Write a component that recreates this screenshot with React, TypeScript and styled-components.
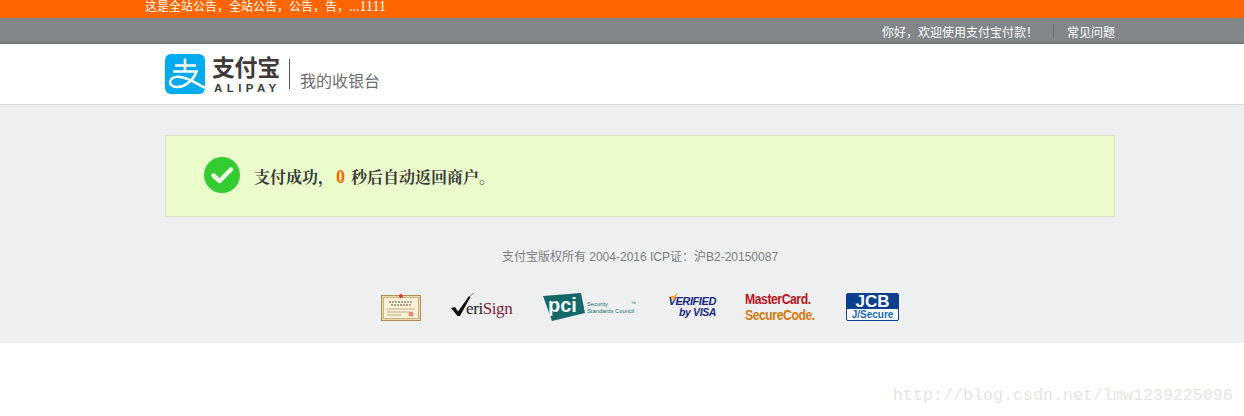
import React from "react";
import styled, { createGlobalStyle } from "styled-components";

const GlobalStyle = createGlobalStyle`
  html, body {
    margin: 0;
    padding: 0;
    background: #fff;
  }
  body {
    font-family: "Liberation Sans", "Noto Sans CJK SC", sans-serif;
  }
`;

const Page = styled.div`
  position: relative;
  width: 1244px;
  height: 416px;
  overflow: hidden;
`;

const Notice = styled.div`
  height: 18px;
  line-height: 14px;
  padding-left: 145px;
  background: #ff6600;
  color: #fff;
  font-size: 12px;
`;

const NoticeTail = styled.span`
  font-family: "Liberation Serif", serif;
  font-size: 14px;
`;

const TopBar = styled.div`
  height: 26px;
  display: flex;
  align-items: center;
  justify-content: flex-end;
  padding-right: 129px;
  background: linear-gradient(#7f8589 0, #82878b 88%, #6f7477 100%);
  color: #fff;
  font-size: 12px;
`;

const TopDivider = styled.span`
  width: 1px;
  height: 14px;
  margin: 0 13px 0 15px;
  background: #6c7276;
`;

const Header = styled.header`
  height: 60px;
  display: flex;
  padding-left: 165px;
  background: #fff;
  border-bottom: 1px solid #d9d9d9;
`;

const LogoMark = styled.svg`
  width: 40px;
  height: 40px;
  margin-top: 10px;
  flex: none;
`;

const Wordmark = styled.div`
  width: 68px;
  margin: 10px 0 0 7px;
  color: #3f3a39;
`;

const WordCn = styled.div`
  font-size: 23px;
  line-height: 28px;
  font-weight: 700;
  letter-spacing: -0.4px;
  white-space: nowrap;
`;

const WordEn = styled.div`
  font-size: 11.5px;
  line-height: 13px;
  font-weight: 700;
  letter-spacing: 4.4px;
  margin-left: 2px;
  white-space: nowrap;
`;

const HeaderDivider = styled.span`
  width: 1px;
  height: 30px;
  margin: 15px 10px 0 9px;
  background: #55585a;
`;

const Cashier = styled.div`
  margin-top: 27px;
  font-size: 16px;
  line-height: 22px;
  color: #6c6c6c;
`;

const Main = styled.main`
  height: 238px;
  padding-top: 30px;
  box-sizing: border-box;
  background: #eeeff1;
`;

const SuccessCard = styled.section`
  width: 950px;
  height: 82px;
  margin-left: 165px;
  padding-left: 38px;
  box-sizing: border-box;
  display: flex;
  align-items: center;
  gap: 14px;
  background: #ebfdcb;
  border: 1px solid #dfe4c4;
`;

const CheckIcon = styled.svg`
  width: 36px;
  height: 36px;
  flex: none;
  margin-bottom: 2px;
`;

const SuccessText = styled.p`
  margin: 2px 0 0;
  font-family: "Liberation Serif", "Noto Serif CJK SC", "Noto Sans CJK SC", serif;
  font-size: 16px;
  line-height: 20px;
  font-weight: 700;
  color: #3a3a3a;
`;

const Count = styled.b`
  margin: 0 6px 0 2px;
  font-size: 18px;
  color: #ff6600;
`;

const Copyright = styled.p`
  margin: 31px 0 0;
  padding-left: 36px;
  font-size: 12px;
  line-height: 18px;
  text-align: center;
  color: #7d7d7d;
`;

const Badges = styled.div`
  display: flex;
  align-items: center;
  margin: 26px 0 0 381px;
  height: 30px;
`;

const Badge = styled.div<{ $width: number; $gap?: number }>`
  position: relative;
  width: ${(p) => p.$width}px;
  margin-right: ${(p) => p.$gap ?? 0}px;
  flex: none;
`;

const CertSvg = styled.svg`
  display: block;
`;

const VeriText = styled.span`
  display: block;
  padding: 4px 0 0 15px;
  font-family: "Liberation Serif", serif;
  font-size: 17px;
  line-height: 24px;
  letter-spacing: -0.4px;
  color: #1c1c1c;
  white-space: nowrap;
`;

const VeriAccent = styled.span`
  color: #7b1f3d;
`;

const VeriTick = styled.svg`
  position: absolute;
  left: 0;
  top: 0;
`;

const PciFlag = styled.svg`
  display: block;
  flex: none;
`;

const PciWrap = styled.div`
  display: flex;
  align-items: center;
  gap: 2px;
`;

const PciCaption = styled.span`
  font-size: 5.8px;
  line-height: 7px;
  margin-top: 2px;
  color: #16736d;
  white-space: nowrap;
`;

const PciMark = styled.span`
  position: absolute;
  right: 1px;
  top: 8px;
  font-size: 5px;
  line-height: 5px;
  color: #16736d;
`;

const VisaWrap = styled.div`
  font-style: italic;
  font-weight: 700;
  color: #1a2a80;
  text-align: right;
`;

const VisaLine = styled.div<{ $size: number }>`
  font-size: ${(p) => p.$size}px;
  line-height: 11px;
  letter-spacing: -0.4px;
  white-space: nowrap;
`;

const VisaWing = styled.svg`
  position: absolute;
  left: 0;
  top: -4px;
`;

const McLine = styled.div<{ $color: string }>`
  font-size: 14px;
  line-height: 16px;
  font-weight: 700;
  letter-spacing: -0.5px;
  color: ${(p) => p.$color};
  white-space: nowrap;
  transform: scaleX(0.87);
  transform-origin: left center;
`;

const JcbBox = styled.div`
  width: 53px;
  height: 28px;
  box-sizing: border-box;
  border: 1px solid #0a3f8f;
  border-radius: 2px;
  background: #0a3f8f;
  color: #fff;
  text-align: center;
  font-weight: 700;
  overflow: hidden;
`;

const JcbTop = styled.div`
  font-size: 17px;
  line-height: 15px;
`;

const JcbBottom = styled.div`
  height: 11px;
  background: #fff;
  color: #1668b5;
  font-size: 10px;
  line-height: 11px;
`;

const Watermark = styled.div`
  position: absolute;
  left: 893px;
  top: 386px;
  font-family: "Liberation Mono", monospace;
  font-size: 16.67px;
  line-height: 20px;
  color: #e6e6de;
  white-space: nowrap;
`;

export default function App() {
  return (
    <Page>
      <GlobalStyle />
      <Notice>
        这是全站公告，全站公告，公告，告，<NoticeTail>...1111</NoticeTail>
      </Notice>
      <TopBar>
        <span>你好，欢迎使用支付宝付款！</span>
        <TopDivider />
        <span>常见问题</span>
      </TopBar>
      <Header>
        <LogoMark viewBox="0 0 40 40">
          <rect width="40" height="40" rx="6" fill="#00aaee" />
          <path
            d="M10 11.5h21M20 4.5v13M8 17.5h23.5C29 25 21 33 12.5 33 7.5 33 5 31 5 28c0-3 3.5-5.2 8-5.2 9 0 17 6 27 11"
            fill="none"
            stroke="#fff"
            strokeWidth="2.6"
          />
        </LogoMark>
        <Wordmark>
          <WordCn>支付宝</WordCn>
          <WordEn>ALIPAY</WordEn>
        </Wordmark>
        <HeaderDivider />
        <Cashier>我的收银台</Cashier>
      </Header>
      <Main>
        <SuccessCard>
          <CheckIcon viewBox="0 0 36 36">
            <circle cx="18" cy="18" r="18" fill="#33cc33" />
            <path
              d="M9.5 18.5l6 5.5L27 12.5"
              fill="none"
              stroke="#f2fbe6"
              strokeWidth="4.5"
              strokeLinecap="round"
              strokeLinejoin="round"
            />
          </CheckIcon>
          <SuccessText>
            支付成功，<Count>0</Count>秒后自动返回商户。
          </SuccessText>
        </SuccessCard>
        <Copyright>支付宝版权所有 2004-2016 ICP证：沪B2-20150087</Copyright>
        <Badges>
          <Badge $width={40} $gap={30}>
            <CertSvg width="40" height="28" viewBox="0 0 40 28">
              <rect x="0.5" y="2.5" width="39" height="25" fill="#e9d9ac" stroke="#b08f52" />
              <rect x="2.5" y="4.5" width="35" height="21" fill="#f8f0d8" stroke="#cdb67e" />
              <circle cx="20" cy="3" r="2" fill="#d0402c" />
              <path d="M8 9h24M10 12h20" stroke="#57503f" strokeWidth="1" strokeDasharray="2 1" />
              <path d="M6 16h28M6 19h22M6 22h14" stroke="#bfae84" strokeWidth="1" />
              <circle cx="30" cy="21" r="2.5" fill="#e08a76" />
            </CertSvg>
          </Badge>
          <Badge $width={65} $gap={27}>
            <VeriTick width="26" height="26" viewBox="0 0 26 26">
              <path d="M0 15l4-1 3 4.5L18 3l1.5 1L9 23H6.5z" fill="#111" />
              <path d="M19 3l4-3" stroke="#8a7f86" strokeWidth="1" />
            </VeriTick>
            <VeriText>
              eri<VeriAccent>Sign</VeriAccent>
            </VeriText>
          </Badge>
          <Badge $width={94} $gap={30}>
            <PciWrap>
              <PciFlag width="42" height="28" viewBox="0 0 42 28">
                <path d="M0 3L38 0l4 20-33 8z" fill="#14686a" />
                <text x="5" y="19" fontFamily="Liberation Sans" fontWeight="700" fontSize="20" fill="#fff">
                  pci
                </text>
              </PciFlag>
              <PciCaption>
                Security
                <br />
                Standards Council
              </PciCaption>
            </PciWrap>
            <PciMark>™</PciMark>
          </Badge>
          <Badge $width={49} $gap={29}>
            <VisaWing width="14" height="12" viewBox="0 0 14 12">
              <path d="M0 4h7L11 0 7 9 5 5z" fill="#f5a623" />
            </VisaWing>
            <VisaWrap>
              <VisaLine $size={11}>VERIFIED</VisaLine>
              <VisaLine $size={10.5}>by VISA</VisaLine>
            </VisaWrap>
          </Badge>
          <Badge $width={71} $gap={30}>
            <McLine $color="#b5121b">MasterCard.</McLine>
            <McLine $color="#d2780f">SecureCode.</McLine>
          </Badge>
          <Badge $width={53}>
            <JcbBox>
              <JcbTop>JCB</JcbTop>
              <JcbBottom>J/Secure</JcbBottom>
            </JcbBox>
          </Badge>
        </Badges>
      </Main>
      <Watermark>http://blog.csdn.net/lmw1239225096</Watermark>
    </Page>
  );
}
